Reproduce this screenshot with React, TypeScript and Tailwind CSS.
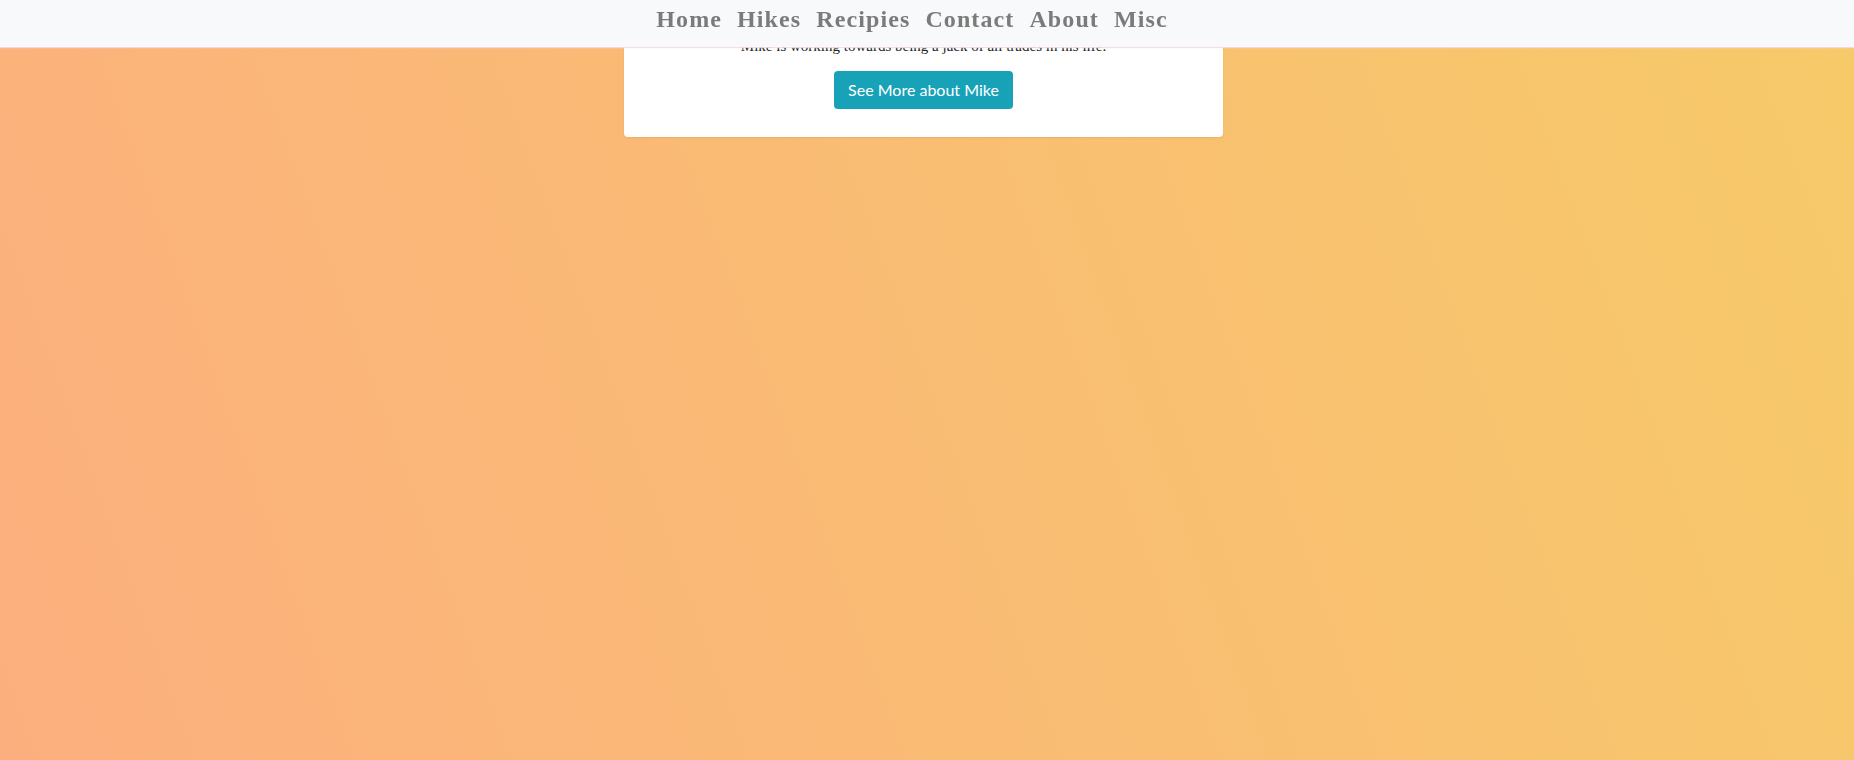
import { memo } from 'react'

const navLinks: string[] = ['Home', 'Hikes', 'Recipies', 'Contact', 'About', 'Misc']

const NavBar = memo(function NavBar() {
  return (
    <nav className="fixed top-0 left-0 right-0 h-[47px] bg-[#f8f9fa] shadow-[0_1px_1px_rgba(240,220,230,0.9)] flex items-center justify-center gap-[15px] pr-[30px] z-20">
      {navLinks.map((label: string) => (
        <a
          key={label}
          href="#"
          className="text-[24px] leading-none font-bold text-[#7b7b7b] tracking-[1.1px] pb-[9px]"
          style={{ fontFamily: '"Liberation Serif", "DejaVu Serif", serif' }}
        >
          {label}
        </a>
      ))}
    </nav>
  )
})

const AboutCard = memo(function AboutCard() {
  return (
    <div className="w-[599px] mx-auto bg-white rounded-[4px] shadow-[0_1px_2px_rgba(200,140,80,0.25)] flex flex-col items-center pt-[35px] pb-[28px]">
      <p
        className="text-[15px] leading-[22px] text-[#222]"
        style={{ fontFamily: '"Liberation Serif", serif' }}
      >
        Mike is working towards being a jack of all trades in his life.
      </p>
      <button
        className="mt-[14px] h-[38px] px-[14px] rounded-[4px] bg-[#17a2b8] text-white text-[16px]"
        style={{ fontFamily: 'Lato, "Open Sans", sans-serif' }}
      >
        See More about Mike
      </button>
    </div>
  )
})

export default function App() {
  return (
    <div className="min-h-[760px] w-full bg-linear-[70deg] from-[#fcaf7e] to-[#f7ca69] pr-[7px]">
      <NavBar />
      <AboutCard />
    </div>
  )
}
